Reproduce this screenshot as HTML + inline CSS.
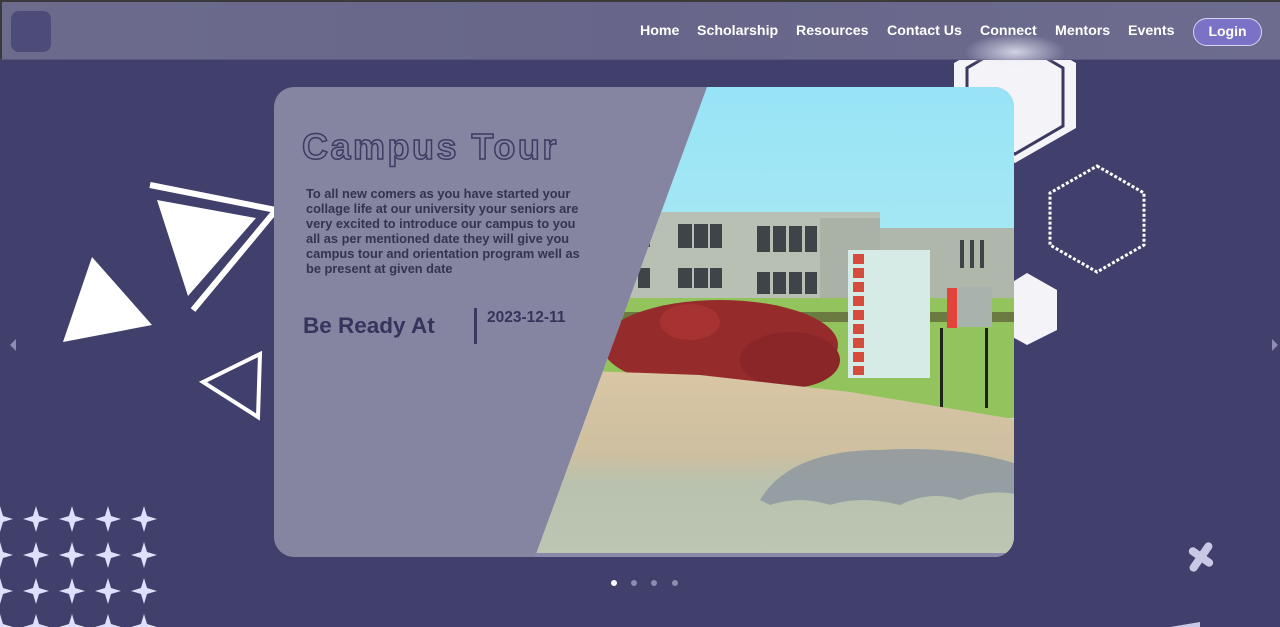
<!DOCTYPE html>
<html><head><meta charset="utf-8"><style>
*{margin:0;padding:0;box-sizing:border-box}
body{width:1280px;height:627px;overflow:hidden;background:#413f6b;font-family:"Liberation Sans",Arial,sans-serif;position:relative}
.topb{position:absolute;left:0;top:0;width:1280px;height:2px;background:#3a3a3c}
.nav{position:absolute;left:0;top:2px;width:1280px;height:58px;background:linear-gradient(90deg,#6c6b8c,#67668a 50%,#6d6c8e);border-left:2px solid #3a3a3c;border-bottom:1px solid #5a5980}
.logo{position:absolute;left:9px;top:9px;width:40px;height:41px;border-radius:8px;background:#4d4b78}
.nav a{position:absolute;top:21px;color:#fff;font-weight:bold;font-size:14.2px;text-decoration:none;white-space:nowrap}
.login{position:absolute;left:1191px;top:16px;width:69px;height:28px;border-radius:14px;background:#7a72c6;border:1.5px solid #d8d6f2;color:#fff;font-weight:bold;font-size:14px;text-align:center;line-height:25px}
.glow{position:absolute;left:958px;top:30px;width:110px;height:40px;background:radial-gradient(ellipse at center,rgba(235,235,250,.8),rgba(200,200,230,0) 65%)}
svg{position:absolute;left:0;top:0}
.txt{position:absolute;color:#33334f}
</style></head><body>
<svg width="1280" height="627" viewBox="0 0 1280 627">
<defs>
<clipPath id="cc"><rect x="274" y="87" width="740" height="470" rx="20"/></clipPath>
<clipPath id="pc"><polygon points="707,87 1014,87 1014,557 535,557"/></clipPath>
<linearGradient id="sky" x1="0" y1="0" x2="0" y2="1"><stop offset="0" stop-color="#97e4f6"/><stop offset="1" stop-color="#c6eef0"/></linearGradient>
<linearGradient id="pav" x1="0" y1="0" x2="0" y2="1"><stop offset="0" stop-color="#d9c6a4"/><stop offset=".45" stop-color="#cdbfa0"/><stop offset=".6" stop-color="#b8c2ae"/><stop offset="1" stop-color="#bcc6b2"/></linearGradient>
</defs>
<polygon points="1015,28 1076,63 1076,128 1015,163 954,128 954,63" fill="#f4f4f8"/>
<polygon points="1015,40 1063,68 1063,126 1015,154 967,126 967,68" fill="none" stroke="#3b3960" stroke-width="3"/>
<polygon points="1057,290 1057,330 1027,345 1000,330 1000,290 1027,273" fill="#f4f4f8"/>
<polygon points="1097,166 1144,193 1144,245 1097,272 1050,245 1050,193" fill="none" stroke="#fff" stroke-width="3" stroke-dasharray="3 2"/>
<polyline points="150,185 276,210 193,310" fill="none" stroke="#fff" stroke-width="6"/>
<polygon points="157,200 256,218 188,296" fill="#fff"/>
<polygon points="92,257 152,325 63,342" fill="#fff"/>
<polygon points="203,382 260,354 258,417" fill="none" stroke="#fff" stroke-width="4"/>
<g fill="#dde0fb" id="stars"></g>
<g transform="translate(1201,557) rotate(35)" fill="#c9c9e6"><rect x="-4" y="-17" width="8" height="34" rx="4"/><rect x="-14" y="-4" width="28" height="8" rx="4"/></g>
<polygon points="1170,627 1200,622 1200,627" fill="#c9c9e6"/>
<polygon points="16,339 10,345 16,351" fill="#8e8cb0"/>
<polygon points="1272,339 1278,345 1272,351" fill="#8e8cb0"/>
<rect x="274" y="87" width="740" height="470" rx="20" fill="#8584a1"/>
<g clip-path="url(#cc)"><g clip-path="url(#pc)">
<rect x="500" y="87" width="520" height="480" fill="url(#sky)"/>
<rect x="620" y="212" width="260" height="95" fill="#b8c0b4"/>
<rect x="870" y="228" width="150" height="80" fill="#afb7ab"/>
<rect x="820" y="218" width="60" height="90" fill="#aab2a6"/>
<g fill="#3e4548">
<rect x="678" y="224" width="14" height="24"/><rect x="694" y="224" width="14" height="24"/><rect x="710" y="224" width="12" height="24"/>
<rect x="757" y="226" width="13" height="26"/><rect x="773" y="226" width="13" height="26"/><rect x="789" y="226" width="13" height="26"/><rect x="805" y="226" width="12" height="26"/>
<rect x="678" y="268" width="14" height="20"/><rect x="694" y="268" width="14" height="20"/><rect x="710" y="268" width="12" height="20"/>
<rect x="757" y="272" width="13" height="22"/><rect x="773" y="272" width="13" height="22"/><rect x="789" y="272" width="13" height="22"/><rect x="805" y="272" width="12" height="22"/>
<rect x="960" y="240" width="4" height="28"/><rect x="970" y="240" width="4" height="28"/><rect x="980" y="240" width="4" height="28"/>
<rect x="640" y="225" width="10" height="22"/><rect x="638" y="268" width="12" height="20"/>
</g>
<rect x="600" y="298" width="420" height="120" fill="#93c35c"/>
<rect x="600" y="312" width="420" height="10" fill="#6a7a40"/>
<ellipse cx="720" cy="345" rx="118" ry="45" fill="#962b2c"/>
<ellipse cx="690" cy="322" rx="30" ry="18" fill="#a63232"/>
<ellipse cx="790" cy="360" rx="50" ry="28" fill="#8a2628"/>
<rect x="848" y="250" width="82" height="128" fill="#d6ebe6"/>
<g fill="#d64c3c"><rect x="853" y="254" width="11" height="10"/><rect x="853" y="268" width="11" height="10"/><rect x="853" y="282" width="11" height="10"/><rect x="853" y="296" width="11" height="10"/><rect x="853" y="310" width="11" height="10"/><rect x="853" y="324" width="11" height="10"/><rect x="853" y="338" width="11" height="10"/><rect x="853" y="352" width="11" height="10"/><rect x="853" y="366" width="11" height="9"/></g>
<rect x="947" y="288" width="10" height="40" fill="#e2433a"/>
<rect x="957" y="287" width="35" height="40" fill="#a9b3ad"/>
<rect x="940" y="328" width="3" height="80" fill="#1f241a"/><rect x="985" y="328" width="3" height="80" fill="#1f241a"/>
<polygon points="560,370 700,375 850,392 1020,420 1020,560 520,560" fill="url(#pav)"/>
<path d="M760,500 Q790,450 880,450 Q960,445 1020,465 L1020,495 Q990,488 960,500 Q930,490 900,505 Q860,495 830,505 Q800,495 770,505Z" fill="#8e98a0" opacity=".85"/>
</g></g>
<rect x="535" y="553" width="475" height="4" fill="#8a89ad" clip-path="url(#cc)"/>
<text x="302" y="159" font-family="Liberation Sans,Arial,sans-serif" font-weight="bold" font-size="36" letter-spacing="2.5" fill="#8584a1" stroke="#3d3b62" stroke-width="1.5">Campus Tour</text>
<rect x="474" y="308" width="3" height="36" fill="#3a3960"/>
<circle cx="614" cy="583" r="3" fill="#fff"/><circle cx="634" cy="583" r="3" fill="#8e8cb0"/><circle cx="654" cy="583" r="3" fill="#8e8cb0"/><circle cx="675" cy="583" r="3" fill="#8e8cb0"/>
</svg>
<div class="txt" style="left:306px;top:186px;width:280px;font-size:12.8px;font-weight:bold;line-height:15px;color:#34344c">To all new comers as you have started your collage life at our university your seniors are very excited to introduce our campus to you all as per mentioned date they will give you campus tour and orientation program well as be present at given date</div>
<div class="txt" style="left:303px;top:313px;font-size:22.5px;font-weight:bold;color:#35345c">Be Ready At</div>
<div class="txt" style="left:487px;top:309px;font-size:15.5px;font-weight:bold;color:#35345a">2023-12-11</div>
<div class="topb"></div>
<div class="nav"><div class="logo"></div>
<div class="glow"></div>
<a style="left:638px">Home</a><a style="left:695px">Scholarship</a><a style="left:794px">Resources</a><a style="left:885px">Contact Us</a><a style="left:978px">Connect</a><a style="left:1053px">Mentors</a><a style="left:1126px">Events</a>
<div class="login">Login</div></div>
<script>
var g=document.getElementById('stars'),s='';
for(var r=0;r<4;r++)for(var c=0;c<5;c++){s+='<path d="M0,-13 L3,-3 L13,0 L3,3 L0,13 L-3,3 L-13,0 L-3,-3Z" transform="translate('+(c*36)+','+(519+r*36)+')"/>';}
g.innerHTML=s;
</script>
</body></html>
